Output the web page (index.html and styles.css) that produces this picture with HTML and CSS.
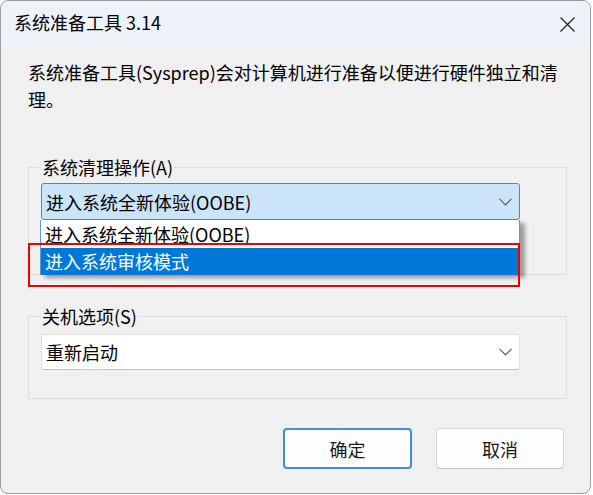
FILE: index.html
```html
<!DOCTYPE html>
<html lang="zh-CN">
<head>
<meta charset="utf-8">
<title>系统准备工具 3.14</title>
<link rel="stylesheet" href="styles.css">
</head>
<body>
<div class="window">
  <div class="titlebar">
    <span class="title">系统准备工具 3.14</span>
    <svg class="close" width="15" height="15" viewBox="0 0 15 15"><path d="M0.5 0.5 L14.5 14.5 M14.5 0.5 L0.5 14.5" stroke="#1a1a1a" stroke-width="1.1" fill="none"/></svg>
  </div>
  <div class="content">
    <p class="intro">系统准备工具(Sysprep)会对计算机进行准备以便进行硬件独立和清<br>理。</p>
    <fieldset class="group group-cleanup">
      <legend>系统清理操作(A)</legend>
      <div class="combo-wrap">
        <div class="combo combo-open">
          <span>进入系统全新体验(OOBE)</span>
          <svg class="chevron" width="13" height="8" viewBox="0 0 13 8"><path d="M0.5 0.8 L6.5 6.8 L12.5 0.8" stroke="#5f5f5f" stroke-width="1.2" fill="none"/></svg>
        </div>
        <ul class="dropdown">
          <li>进入系统全新体验(OOBE)</li>
          <li class="selected">进入系统审核模式</li>
        </ul>
        <div class="highlight"></div>
      </div>
    </fieldset>
    <fieldset class="group group-shutdown">
      <legend>关机选项(S)</legend>
      <div class="combo">
        <span>重新启动</span>
        <svg class="chevron" width="13" height="8" viewBox="0 0 13 8"><path d="M0.5 0.8 L6.5 6.8 L12.5 0.8" stroke="#5f5f5f" stroke-width="1.2" fill="none"/></svg>
      </div>
    </fieldset>
    <div class="buttons">
      <button class="btn btn-default">确定</button>
      <button class="btn btn-cancel">取消</button>
    </div>
  </div>
</div>
</body>
</html>
```
FILE: styles.css
```css
html, body {
  margin: 0;
  padding: 0;
  background: #ffffff;
}

body {
  font-family: "Noto Sans CJK SC", "Microsoft YaHei UI", sans-serif;
  font-size: 18px;
  color: #000000;
}

.window {
  box-sizing: border-box;
  width: 591px;
  height: 494px;
  border: 1px solid #9c9c9c;
  border-radius: 8px;
  background: #f0f0f0;
  overflow: hidden;
}

.titlebar {
  box-sizing: border-box;
  height: 46px;
  padding: 0 15px 4px 13px;
  background: #eef3f9;
  display: flex;
  align-items: center;
  justify-content: space-between;
}

.title {
  font-size: 18px;
  line-height: 20px;
  color: #000;
}

.close {
  display: block;
  margin-top: 4px;
}

.content {
  padding: 12px 23px 0 27px;
}

.intro {
  margin: 0;
  line-height: 27px;
  white-space: nowrap;
}

.group {
  margin: 0;
  padding: 0 0 54px 12px;
  border: 1px solid #dcdcdc;
  min-width: 0;
}

.group legend {
  padding: 0 1px;
  line-height: 20px;
  color: #000;
}

.group-cleanup {
  margin-top: 44px;
}

.group-shutdown {
  margin-top: 31px;
  padding-bottom: 28px;
}

.combo-wrap {
  position: relative;
  width: 479px;
  margin-top: 6px;
}

.combo {
  box-sizing: border-box;
  width: 479px;
  height: 37px;
  border: 1px solid #e0e0e0;
  border-bottom-color: #c4c4c4;
  border-radius: 3px;
  background: #ffffff;
  padding: 0 7px 0 4px;
  display: flex;
  align-items: center;
  justify-content: space-between;
  line-height: 20px;
}

.group-shutdown .combo {
  height: 36px;
  margin-top: 8px;
}

.combo-open {
  background: #cce4f7;
  border-color: #3d8bd8;
}

.chevron {
  display: block;
}

.dropdown {
  position: absolute;
  left: -1px;
  top: 100%;
  width: 480px;
  box-sizing: border-box;
  margin: 0;
  padding: 0;
  list-style: none;
  background: #ffffff;
  border: 1px solid #5c9ad8;
  border-top: none;
  border-bottom: none;
  box-shadow: 5px 3px 4px rgba(0, 0, 0, 0.35);
  z-index: 2;
}

.dropdown li {
  height: 28px;
  line-height: 28px;
  padding-left: 4px;
  color: #000;
}

.dropdown li.selected {
  height: 27px;
  line-height: 27px;
  background: #0078d7;
  color: #ffffff;
}

.highlight {
  position: absolute;
  left: -13px;
  top: 60px;
  width: 492px;
  height: 44px;
  box-sizing: border-box;
  border: 2px solid #f00000;
  z-index: 3;
}

.buttons {
  margin-top: 29px;
  padding-right: 3px;
  display: flex;
  justify-content: flex-end;
  gap: 24px;
}

.btn {
  box-sizing: border-box;
  height: 41px;
  border-radius: 4px;
  background: #fdfdfd;
  font-family: inherit;
  font-size: 18px;
  color: #1a1a1a;
  padding: 0;
  line-height: 20px;
}

.btn-default {
  width: 129px;
  border: 2px solid #3f8ddb;
}

.btn-cancel {
  width: 128px;
  border: 1px solid #d6d6d6;
  border-bottom-color: #c2c2c2;
}
```
